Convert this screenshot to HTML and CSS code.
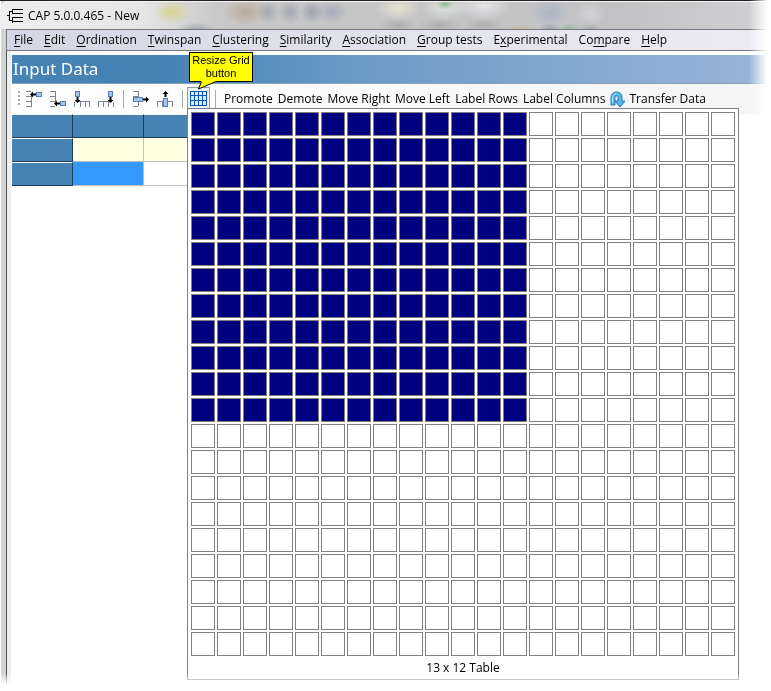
FILE: index.html
```
<!DOCTYPE html>
<html lang="en">
<head>
    <meta charset="UTF-8">
    <meta name="viewport" content="width=device-width, initial-scale=1.0">
    <title>CAP 5.0.0.465 - New</title>
    <link rel="stylesheet" href="styles.css">
</head>
<body>
    <div class="window">
        <header class="titlebar">
            <svg width="17" height="14" viewBox="0 0 17 14" fill="none" stroke="#000">
                <path d="M0 6.500H2M2.500 2V12M2 2.500H5M5.500 0V5M5 .5H16M5 4.500H16M2 11.500H5M5.500 8V14M5 8.500H16M5 12.500H16"/>
            </svg>
            <span>CAP 5.0.0.465 - New</span>
        </header>

        <nav class="menubar">
            <button><u>F</u>ile</button>
            <button><u>E</u>dit</button>
            <button><u>O</u>rdination</button>
            <button><u>T</u>winspan</button>
            <button><u>C</u>lustering</button>
            <button><u>S</u>imilarity</button>
            <button><u>A</u>ssociation</button>
            <button><u>G</u>roup tests</button>
            <button>E<u>x</u>perimental</button>
            <button>Co<u>m</u>pare</button>
            <button><u>H</u>elp</button>
        </nav>

        <main class="client">
            <h1 class="heading">Input Data</h1>

            <div class="toolbar">
                <span class="grip"></span>
                <div class="tools">
                    <button aria-label="Insert row above">
                        <svg width="18" height="18" viewBox="0 0 18 18">
                            <path class="frame" d="M1 1.500h5M1 6.500h5M1 11.500h5M1 16.500h5M6.500 6v11"/>
                            <rect class="block" x="11.500" y="2.500" width="5" height="4"/>
                            <path d="M5 4.500l3-3v2h3v2H8v2z"/>
                        </svg>
                    </button>
                    <button aria-label="Insert row below">
                        <svg width="18" height="18" viewBox="0 0 18 18">
                            <path class="frame" d="M1 1.500h5M1 6.500h5M1 11.500h5M1 16.500h5M6.500 1v11"/>
                            <rect class="block" x="11.500" y="11.500" width="5" height="4"/>
                            <path d="M5 13.500l3-3v2h3v2H8v2z"/>
                        </svg>
                    </button>
                    <button aria-label="Insert column left">
                        <svg width="18" height="18" viewBox="0 0 18 18">
                            <path class="frame" d="M1.500 17v-5M7.500 17v-5M12.500 17v-5M16.500 17v-5M6 11.500h11"/>
                            <rect class="block" x="2.500" y="1.500" width="4" height="5"/>
                            <path d="M4.500 13l-3-3h2V7h2v3h2z"/>
                        </svg>
                    </button>
                    <button aria-label="Insert column right">
                        <svg width="18" height="18" viewBox="0 0 18 18">
                            <path class="frame" d="M1.500 17v-5M6.500 17v-5M11.500 17v-5M16.500 17v-5M1 11.500h11"/>
                            <rect class="block" x="11.500" y="1.500" width="4" height="5"/>
                            <path d="M13.500 13l-3-3h2V7h2v3h2z"/>
                        </svg>
                    </button>
                </div>
                <span class="separator"></span>
                <div class="tools">
                    <button aria-label="Delete row">
                        <svg width="18" height="18" viewBox="0 0 18 18">
                            <path class="frame" d="M1 1.500h5M1 6.500h5M1 11.500h5M1 16.500h5M6.500 1v15"/>
                            <rect class="block" x="1.500" y="7.500" width="9" height="4"/>
                            <path d="M17 9.500l-3-3v2h-3v2h3v2z"/>
                        </svg>
                    </button>
                    <button aria-label="Delete column">
                        <svg width="18" height="18" viewBox="0 0 18 18">
                            <path class="frame" d="M1.500 17v-5M6.500 17v-5M11.500 17v-5M16.500 17v-5M1 11.500h16"/>
                            <rect class="block" x="7.500" y="8.500" width="4" height="8"/>
                            <path d="M9.500 1l-3 3h2v3h2V4h2z"/>
                        </svg>
                    </button>
                </div>
                <span class="separator"></span>
                <div class="resize">
                    <button class="resize-button" aria-label="Resize grid">
                        <svg width="17" height="15" viewBox="0 0 17 15">
                            <path d="M0 0h17v15H0z" fill="#0a55b8"/>
                            <path d="M1 1h3v3H1zM5 1h3v3H5zM9 1h3v3H9zM13 1h3v3h-3zM1 5h3v4H1zM5 5h3v4H5zM9 5h3v4H9zM13 5h3v4h-3zM1 10h3v4H1zM5 10h3v4H5zM9 10h3v4H9zM13 10h3v4h-3z" fill="#d9edff"/>
                        </svg>
                    </button>
                    <div class="picker">
                        <div class="cells" id="cells"></div>
                        <output class="size" id="size">13 x 12 Table</output>
                    </div>
                    <div class="callout">
                        Resize Grid<br>button
                        <svg class="tail" width="22" height="9" viewBox="0 0 22 9">
                            <path d="M4 -1V1L1.500 8L19 1V-1z" fill="#ff0"/>
                            <path d="M4.500 .5L1.500 8L19 .5" fill="none" stroke="#000"/>
                        </svg>
                    </div>
                </div>
                <span class="separator"></span>
                <div class="actions">
                    <button>Promote</button>
                    <button>Demote</button>
                    <button>Move Right</button>
                    <button>Move Left</button>
                    <button>Label Rows</button>
                    <button>Label Columns</button>
                    <button class="transfer">
                        <svg width="16" height="17" viewBox="0 0 16 17">
                            <path d="M1 14V6.500C1 3 3.500 1 6.500 1S12 3 12 6.500V10h3l-5 6-5-6h3V6.500C8 5.500 7.500 5 6.500 5S5 5.500 5 6.500V14z" fill="#58b4ec" stroke="#1f78b8"/>
                            <path d="M2.500 12V6.500C2.500 4 4 2.500 6.500 2.500" fill="none" stroke="#b4e2fb"/>
                        </svg>
                        Transfer Data
                    </button>
                </div>
            </div>

            <table class="sheet">
                <tr><th></th><th></th><th></th></tr>
                <tr class="labels"><th></th><td></td><td></td></tr>
                <tr><th></th><td class="current"></td><td></td></tr>
            </table>
        </main>
    </div>

    <script src="script.js"></script>
</body>
</html>
```
FILE: styles.css
```
* {
    box-sizing: border-box;
}

body {
    margin: 0;
    background-color: #fff;
    color: #000;
    font: 12px/16px "Open Sans", sans-serif;
}

button {
    display: flex;
    align-items: center;
    padding: 0;
    border: none;
    background: none;
    color: inherit;
    font: inherit;
    white-space: nowrap;
}

svg {
    display: block;
    flex: none;
}

/* the window fades out at its right and bottom edges */
.window {
    min-height: 100vh;
    padding-left: 6px;
    border-top: 1px solid #222;
    background: linear-gradient(90deg, #fff 1px, #d4d6d6 1px, #d0d2d2 6px, #fff 6px);
    mask-image: linear-gradient(90deg, #000 calc(100% - 22px), transparent calc(100% - 4px)),
        linear-gradient(180deg, #000 calc(100% - 18px), transparent calc(100% - 6px));
    mask-composite: intersect;
}

.titlebar {
    display: flex;
    align-items: center;
    gap: 4px;
    height: 28px;
    margin-left: -6px;
    padding-left: 7px;
    border-top: 1px solid #f4f4f4;
    border-top-left-radius: 8px;
    background:
        radial-gradient(ellipse 18px 12px at 172px 10px, #d8d27acc, #d8d27a00),
        radial-gradient(ellipse 20px 8px at 196px 28px, #80889099, #80889000),
        radial-gradient(ellipse 22px 14px at 246px 10px, #b0987899, #b0987800),
        radial-gradient(circle 12px at 268px 10px, #9298a6aa, #9298a600),
        radial-gradient(circle 12px at 290px 10px, #9298a6aa, #9298a600),
        radial-gradient(circle 12px at 312px 10px, #868e9caa, #868e9c00),
        radial-gradient(ellipse 16px 12px at 332px 10px, #989fb2aa, #989fb200),
        radial-gradient(ellipse 24px 12px at 398px 6px, #eee8d6cc, #eee8d600),
        radial-gradient(ellipse 20px 7px at 398px 23px, #a2a2a2aa, #a2a2a200),
        radial-gradient(ellipse 9px 6px at 445px 2px, #6fae74aa, #6fae7400),
        radial-gradient(ellipse 24px 12px at 445px 6px, #e4eae4cc, #e4eae400),
        radial-gradient(ellipse 22px 7px at 439px 23px, #a2a2a2aa, #a2a2a200),
        radial-gradient(ellipse 28px 14px at 484px 4px, #ececf0cc, #ececf000),
        radial-gradient(ellipse 20px 7px at 484px 23px, #a2a2a2aa, #a2a2a200),
        radial-gradient(ellipse 20px 14px at 550px 11px, #a0aec8aa, #a0aec800),
        radial-gradient(ellipse 16px 12px at 590px 12px, #dcdce0aa, #dcdce000),
        radial-gradient(ellipse 14px 6px at 521px 28px, #c8b07899, #c8b07800),
        radial-gradient(ellipse 12px 7px at 550px 28px, #78889c99, #78889c00),
        radial-gradient(ellipse 12px 7px at 569px 28px, #6fae7699, #6fae7600),
        radial-gradient(ellipse 12px 7px at 591px 28px, #909aa099, #909aa000),
        linear-gradient(90deg, #eee, #e6e6e6 140px, #c8c8c8 220px, #c2c2c4 620px, #d0d1d4);
}

.menubar {
    display: flex;
    align-items: center;
    gap: 11px;
    height: 22px;
    padding-left: 7px;
    border: 1px solid #777;
    border-right: none;
    background: linear-gradient(90deg, #d5d6e5, #e2e3ee 50%, #eceaf4);
}

.menubar u {
    text-underline-offset: 2px;
}

.client {
    min-height: calc(100vh - 51px);
    padding: 4px 0 0 5px;
    border-left: 1px solid #555;
    background: linear-gradient(90deg, #eee 4px, transparent 4px);
}

.heading {
    margin: 0;
    padding-left: 1px;
    border-bottom: 1px solid #8aa0b4;
    background: linear-gradient(90deg, #4682b4 20%, #6a9ac6 45%, #9ab5d8);
    color: #fff;
    font: 17px/28px "Noto Sans", sans-serif;
}

.toolbar {
    display: flex;
    align-items: center;
    height: 30px;
    padding-left: 6px;
    background: linear-gradient(90deg, #fff, #f4f4f4);
}

.grip {
    width: 2px;
    height: 16px;
    margin-right: 5px;
    background: repeating-linear-gradient(180deg, #aaa 0 2px, transparent 2px 4px);
}

.tools {
    display: flex;
    gap: 6px;
}

.frame {
    fill: none;
    stroke: #7a8698;
}

.block {
    fill: #a4c4f0;
    stroke: #5a7db0;
}

.separator {
    width: 1px;
    height: 18px;
    margin: 0 8px;
    background-color: #aaa;
}

.resize {
    position: relative;
    align-self: stretch;
    margin: 3px -3px 0 -4px;
}

.resize-button {
    justify-content: center;
    width: 23px;
    height: 21px;
    border: 1px solid #999;
    border-bottom: none;
    background-color: #eef3f8;
}

.picker {
    position: absolute;
    top: 21px;
    left: 0;
    z-index: 1;
    padding: 3px;
    border: 1px solid #808080;
    background-color: #fff;
}

.cells {
    display: grid;
    grid-template-columns: repeat(21, 24px);
    grid-auto-rows: 24px;
    gap: 2px;
}

.cell {
    border: 1px solid #808080;
    background-color: #fff;
}

.cell.selected {
    background-color: #000080;
}

.size {
    display: block;
    padding-top: 4px;
    text-align: center;
}

.callout {
    position: absolute;
    top: -35px;
    left: 2px;
    z-index: 2;
    width: 64px;
    padding: 1px 0;
    border: 1px solid #000;
    background-color: #ff0;
    font: 11px/13px "Liberation Sans", Arial, sans-serif;
    text-align: center;
    white-space: nowrap;
}

.tail {
    position: absolute;
    top: 100%;
    left: 7px;
    overflow: visible;
}

.actions {
    display: flex;
    align-items: center;
    gap: 5px;
}

.transfer {
    gap: 3px;
}

.sheet {
    width: 203px;
    border-collapse: separate;
    border-spacing: 0;
    table-layout: fixed;
}

.sheet th,
.sheet td {
    height: 24px;
    padding: 0;
    border-right: 1px solid #c0c0c0;
    border-bottom: 1px solid #c0c0c0;
}

.sheet th {
    border-top: 1px solid #fff;
    border-right-color: #1c3c58;
    border-bottom-color: #1c3c58;
    background-color: #4682b4;
}

.sheet th:first-child {
    width: 61px;
}

.sheet .labels td {
    background-color: #ffffe1;
}

.sheet .current {
    background-color: #3399ff;
}
```
FILE: script.js
```
const SIZE = 21;
const cells = document.getElementById("cells");
const size = document.getElementById("size");

for (let i = 0; i < SIZE * SIZE; i++) {
    const cell = document.createElement("button");
    const cols = (i % SIZE) + 1;
    const rows = Math.floor(i / SIZE) + 1;
    cell.className = "cell";
    cell.setAttribute("aria-label", cols + " x " + rows);
    cell.addEventListener("mouseenter", () => select(cols, rows));
    cells.appendChild(cell);
}

function select(cols, rows) {
    [...cells.children].forEach((cell, i) => {
        cell.classList.toggle("selected", i % SIZE < cols && Math.floor(i / SIZE) < rows);
    });
    size.innerText = cols + " x " + rows + " Table";
}

select(13, 12);
```
